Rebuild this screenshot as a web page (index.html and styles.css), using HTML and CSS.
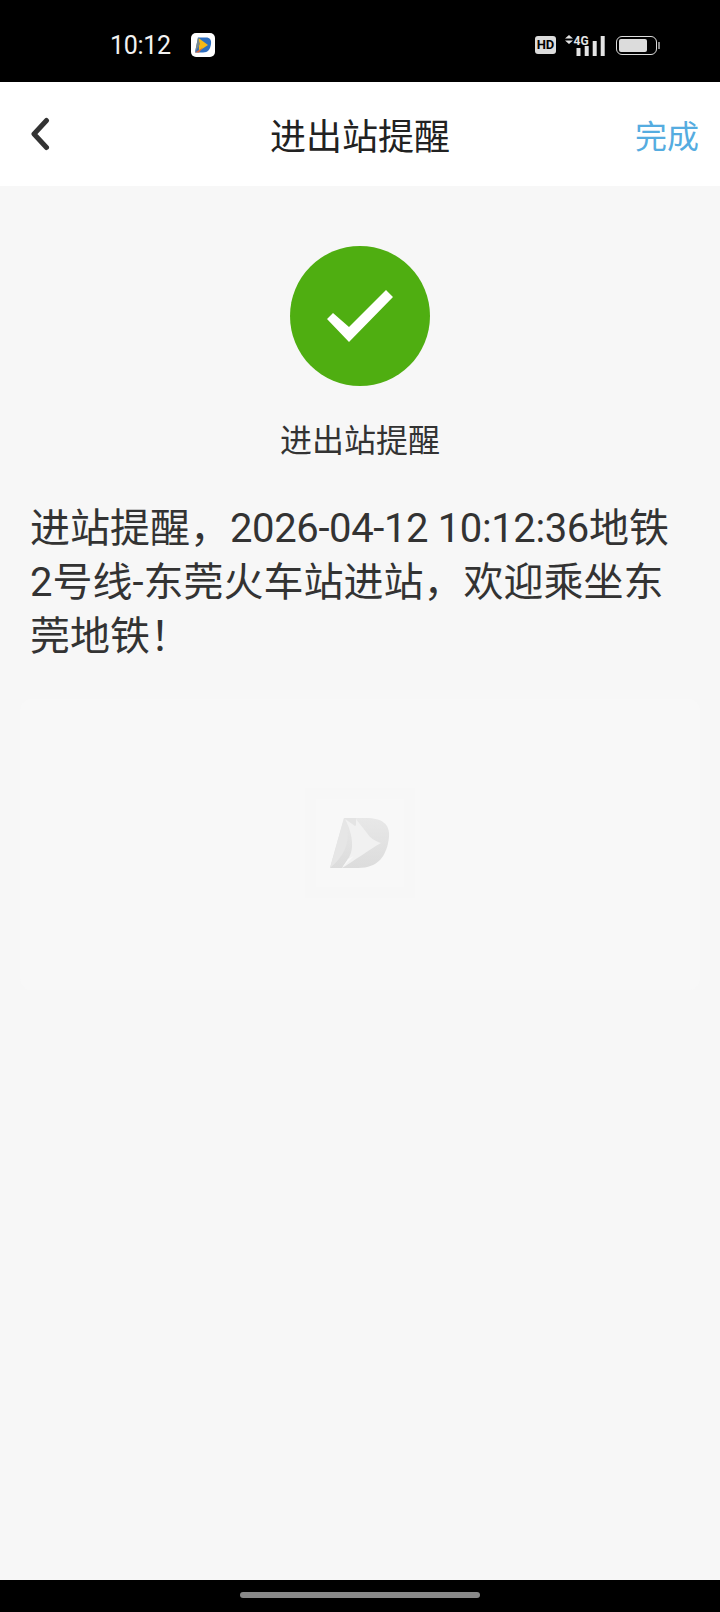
FILE: index.html
```html
<!DOCTYPE html>
<html lang="zh-CN">
<head>
    <meta charset="UTF-8">
    <meta name="viewport" content="width=device-width, initial-scale=1.0">
    <title>进出站提醒</title>
    <link rel="stylesheet" href="styles.css">
</head>
<body>
    <div class="page">
        <div class="status-bar">
            <div class="status-left">
                <span class="status-time">10:12</span>
                <svg class="app-icon" width="24" height="24" viewBox="0 0 24 24">
                    <rect width="24" height="24" rx="5" fill="#fff"/>
                    <path d="M7 4.500H15C19 4.500 20.500 7 20 11C19.300 16 17 19.500 12 19.500H4Z" fill="#2f6fc0"/>
                    <path d="M7.500 5L17 12L8 18Z" fill="#f7b916"/>
                    <path d="M7 4.500L9 11L4 19.500Z" fill="#7a8a8c"/>
                    <path d="M4 19.500L12 14.500L8 19.500Z" fill="#d9683a"/>
                </svg>
            </div>
            <div class="status-right">
                <span class="hd-badge">HD</span>
                <svg class="signal" width="40" height="21" viewBox="0 0 40 21">
                    <path d="M0 3.500L4 0L8 3.500ZM0 5.500L4 9L8 5.500Z" fill="#e4e4e4"/>
                    <text x="8.500" y="9.500" class="signal-text">4G</text>
                    <rect x="11.500" y="13" width="4" height="8" fill="#e4e4e4"/>
                    <rect x="19.700" y="11" width="4" height="10" fill="#e4e4e4"/>
                    <rect x="27.700" y="6" width="4" height="15" fill="#e4e4e4"/>
                    <rect x="35.700" y="1" width="4" height="20" fill="#e4e4e4"/>
                </svg>
                <div class="battery">
                    <div class="battery-level"></div>
                </div>
                <div class="battery-nub"></div>
            </div>
        </div>

        <div class="nav-bar">
            <svg class="back-icon" width="22" height="34" viewBox="0 0 22 34">
                <path d="M17.500 3.500L5 17L17.500 30.500" fill="none" stroke="#333" stroke-width="5" stroke-linecap="round" stroke-linejoin="round"/>
            </svg>
            <h1 class="nav-title">进出站提醒</h1>
            <span class="nav-action">完成</span>
        </div>

        <div class="content">
            <div class="result">
                <svg class="check-icon" width="140" height="140" viewBox="0 0 140 140">
                    <circle cx="70" cy="70" r="70" fill="#4fae11"/>
                    <path d="M37 73L43 67L59 81L96 44L103 51L59 96Z" fill="#fff"/>
                </svg>
                <p class="result-title">进出站提醒</p>
            </div>

            <p class="message">
                <span class="message-line">进站提醒，<span class="message-time">2026-04-12 10:12:36</span>地铁</span>
                <span class="message-line">2号线-东莞火车站进站，欢迎乘坐东</span>
                <span class="message-line">莞地铁！</span>
            </p>

            <div class="banner">
                <div class="placeholder">
                    <div class="placeholder-inner">
                        <svg width="60" height="50" viewBox="0 0 60 50">
                            <defs>
                                <linearGradient id="logoBack" x1="0" y1="0" x2="0" y2="1">
                                    <stop offset="0" stop-color="#e8e8e8"/>
                                    <stop offset="1" stop-color="#dcdcdc"/>
                                </linearGradient>
                            </defs>
                            <path d="M14 0H36C52 0 60 6 59 19C57 38 48 50 28 50H0Z" fill="url(#logoBack)"/>
                            <path d="M15 1L25 8L26 1L37 15C40 20 45 23 51 25C40 31 24 43 12 50L18 41C26 30 21 12 15 1Z" fill="#f1f1f1"/>
                            <path d="M14 0L26 8L26 0Z" fill="#e4e4e4"/>
                            <path d="M0 50C12 40 23 25 15 1L14 0Z" fill="#e6e6e6"/>
                            <path d="M12 50L18 41L24 38Z" fill="#f8f8f8"/>
                        </svg>
                    </div>
                </div>
            </div>
        </div>

        <div class="nav-gesture">
            <div class="gesture-handle"></div>
        </div>
    </div>
</body>
</html>
```

FILE: styles.css
```css
* {
    box-sizing: border-box;
}

body {
    margin: 0;
    font-family: 'Roboto', 'Noto Sans CJK SC', sans-serif;
    background-color: #f7f7f7;
    color: #333;
}

.page {
    display: flex;
    flex-direction: column;
    width: 720px;
    height: 1612px;
    overflow: hidden;
}

/* Status bar */
.status-bar {
    display: flex;
    justify-content: space-between;
    align-items: center;
    height: 82px;
    padding: 8px 60px 0 110px;
    background-color: #000;
}

.status-left {
    display: flex;
    align-items: center;
    gap: 20px;
}

.status-time {
    color: #f2f2f2;
    font-size: 25px;
    letter-spacing: -0.3px;
}

.app-icon {
    display: block;
}

.status-right {
    display: flex;
    align-items: center;
}

.hd-badge {
    width: 21px;
    height: 18px;
    margin-right: 9px;
    border-radius: 3px;
    background-color: #dcdcdc;
    color: #000;
    font-size: 13px;
    font-weight: 700;
    line-height: 18px;
    text-align: center;
}

.signal {
    display: block;
    margin-right: 11px;
}

.signal-text {
    fill: #e4e4e4;
    font-size: 12px;
    font-weight: 700;
}

.battery {
    width: 41px;
    height: 19px;
    padding: 2px;
    border: 1.5px solid #dcdcdc;
    border-radius: 6px;
}

.battery-level {
    width: 28px;
    height: 100%;
    border-radius: 2px;
    background-color: #dcdcdc;
}

.battery-nub {
    width: 2px;
    height: 7px;
    margin-left: 1px;
    background-color: #888;
}

/* Nav */
.nav-bar {
    position: relative;
    display: flex;
    justify-content: space-between;
    align-items: center;
    height: 104px;
    padding: 0 21px 0 29px;
    background-color: #fff;
}

.back-icon {
    display: block;
}

.nav-title {
    position: absolute;
    left: 0;
    right: 0;
    margin: 0;
    color: #222;
    font-size: 36px;
    font-weight: 400;
    text-align: center;
}

.nav-action {
    color: #55ace0;
    font-size: 32px;
}

/* Content */
.content {
    flex: 1;
    padding: 60px 20px 0;
}

.result {
    display: flex;
    flex-direction: column;
    align-items: center;
}

.check-icon {
    display: block;
}

.result-title {
    margin: 33px 0 0;
    font-size: 32px;
    line-height: 44px;
}

.message {
    margin: 39px 10px 0;
    font-size: 40px;
    line-height: 54px;
}

.message-line {
    display: block;
}

.message-time {
    letter-spacing: -0.38px;
}

.banner {
    display: flex;
    justify-content: center;
    align-items: center;
    height: 291px;
    margin-top: 35px;
    padding-bottom: 3px;
    border-radius: 12px;
    background-color: #f8f8f8;
}

.placeholder {
    display: flex;
    justify-content: center;
    align-items: center;
    width: 110px;
    height: 110px;
    background-color: #f7f7f7;
}

.placeholder-inner {
    display: flex;
    justify-content: center;
    align-items: center;
    width: 88px;
    height: 88px;
    background-color: #f8f8f8;
}

/* Gesture bar */
.nav-gesture {
    display: flex;
    justify-content: center;
    height: 32px;
    padding-top: 12px;
    background-color: #000;
}

.gesture-handle {
    width: 240px;
    height: 6px;
    border-radius: 3px;
    background-color: #888;
}
```
